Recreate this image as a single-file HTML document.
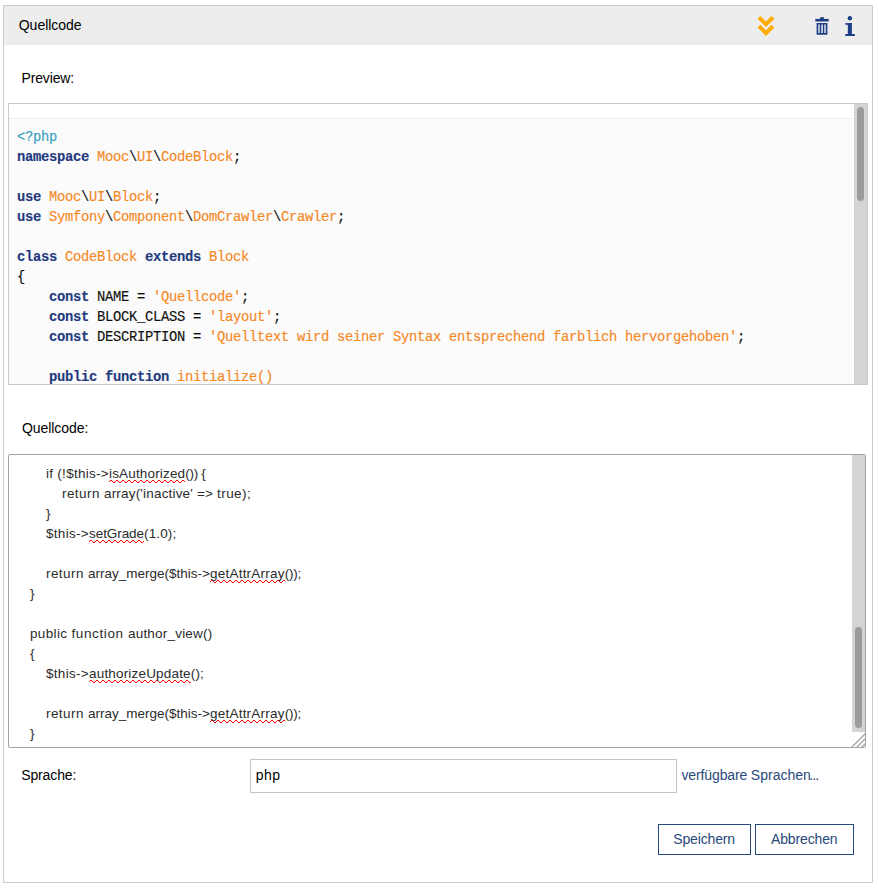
<!DOCTYPE html>
<html lang="de">
<head>
<meta charset="utf-8">
<title>Quellcode</title>
<style>
html,body{margin:0;padding:0;background:#fff;}
body{width:879px;height:888px;position:relative;overflow:hidden;font-family:"Liberation Sans",sans-serif;font-size:14px;color:#111;}
.abs{position:absolute;}
#block{left:3px;top:5px;width:868px;height:876px;border:1px solid #ccc;background:#fff;}
#head{left:4px;top:6px;width:868px;height:39px;background:#ededed;}
.lbl{white-space:pre;line-height:16px;height:16px;color:#000;font-size:14px;}
#preview{left:8px;top:103px;width:858px;height:280px;border:1px solid #cbcbcb;background:#fff;overflow:hidden;}
#pre{left:0;top:14px;width:845px;height:270px;border-top:1px solid #efefef;background:#fbfbfb;}
.track{background:#d4d4d4;}
.thumb{background:#9b9b9d;border-radius:4px;}
.code{font-family:"Liberation Mono",monospace;font-size:13.8px;letter-spacing:-0.28px;line-height:20px;height:20px;white-space:pre;color:#111;left:8px;margin-top:2px;-webkit-text-stroke:0.15px;}
.k{color:#1f3a80;font-weight:bold;}
.c{color:#f5871f;}
.t{color:#379fc6;}
#ta{left:8px;top:454px;width:856px;height:292px;border:1px solid #a3a5a3;border-radius:2px;background:#fff;overflow:hidden;}
.tl{white-space:pre;line-height:20px;height:20px;color:#2b2b2b;font-size:13.5px;}
#inp{left:250px;top:759px;width:425px;height:32px;border:1px solid #c5c5c5;background:#fff;}
.btn{top:824px;height:29px;border:1px solid #28497c;background:#fff;color:#28497c;line-height:29px;text-align:center;white-space:pre;}
</style>
</head>
<body>
<div id="block" class="abs"></div>
<div id="head" class="abs"></div>
<div class="abs lbl" id="title" style="left:18.78px;top:17px;letter-spacing:-0.033px;">Quellcode</div>

<!-- header icons -->
<svg class="abs" style="left:752px;top:10px;" width="112" height="32" viewBox="752 10 112 32">
  <g fill="#ffab00">
    <polygon points="760.4,15.9 757.6,18.7 766,27.1 774.4,18.7 771.6,15.9 766,21.4"/>
    <polygon points="760.4,24.7 757.6,27.5 766,35.9 774.4,27.5 771.6,24.7 766,30.2"/>
  </g>
  <g fill="#1e3f85">
    <rect x="820.1" y="17.2" width="3.8" height="2"/>
    <rect x="815.3" y="18.9" width="13.4" height="2.6"/>
    <path fill-rule="evenodd" d="M816.6 23h10.8v11.8h-10.8z M818.3 24.5v8.4h1.4v-8.4z M821.3 24.5v8.4h1.5v-8.4z M824.3 24.5v8.4h1.4v-8.4z"/>
    <circle cx="849.9" cy="18.2" r="2.2"/>
    <rect x="845.3" y="23.1" width="6.6" height="1.7"/>
    <rect x="847.8" y="23.1" width="4.1" height="12"/>
    <rect x="845.3" y="34" width="9.5" height="2"/>
  </g>
</svg>

<div class="abs lbl" id="l1" style="left:21.48px;top:70px;letter-spacing:-0.145px;">Preview:</div>

<div id="preview" class="abs">
  <div id="pre" class="abs"></div>
  <div class="abs track" style="left:845px;top:0;width:13px;height:280px;"></div>
  <div class="abs thumb" style="left:848px;top:3px;width:7px;height:94px;"></div>
  <div class="abs code" style="top:22px;"><span class="t">&lt;?php</span></div>
  <div class="abs code" style="top:42px;"><span class="k">namespace</span> <span class="c">Mooc</span>\<span class="c">UI</span>\<span class="c">CodeBlock</span>;</div>
  <div class="abs code" style="top:82px;"><span class="k">use</span> <span class="c">Mooc</span>\<span class="c">UI</span>\<span class="c">Block</span>;</div>
  <div class="abs code" style="top:102px;"><span class="k">use</span> <span class="c">Symfony</span>\<span class="c">Component</span>\<span class="c">DomCrawler</span>\<span class="c">Crawler</span>;</div>
  <div class="abs code" style="top:142px;"><span class="k">class</span> <span class="c">CodeBlock</span> <span class="k">extends</span> <span class="c">Block</span></div>
  <div class="abs code" style="top:162px;">{</div>
  <div class="abs code" style="top:182px;">    <span class="k">const</span> NAME = <span class="c">'Quellcode'</span>;</div>
  <div class="abs code" style="top:202px;">    <span class="k">const</span> BLOCK_CLASS = <span class="c">'layout'</span>;</div>
  <div class="abs code" style="top:222px;">    <span class="k">const</span> DESCRIPTION = <span class="c">'Quelltext wird seiner Syntax entsprechend farblich hervorgehoben'</span>;</div>
  <div class="abs code" style="top:262px;">    <span class="k">public</span> <span class="k">function</span> <span class="c">initialize()</span></div>
</div>

<div class="abs lbl" id="l2" style="left:21.91px;top:420px;letter-spacing:-0.049px;">Quellcode:</div>

<div id="ta" class="abs">
  <div class="abs track" style="left:843px;top:0;width:13px;height:277px;"></div>
  <div class="abs thumb" style="left:846px;top:172px;width:7px;height:101px;"></div>
  <svg class="abs" style="left:842px;top:277px;" width="15" height="15" viewBox="0 0 15 15">
    <path d="M0.7 15.3L15.3 0.7M5.7 15.3L15.3 5.7M10.7 15.3L15.3 10.7" stroke="#a6a8a6" stroke-width="1.4" fill="none"/>
  </svg>
<!--TA-->
  <div class="abs tl" style="left:37px;top:9px;letter-spacing:0.279px;">if (!$this-&gt;</div>
  <svg class="abs" style="left:100px;top:25px;" width="76" height="3" viewBox="0 0 76 3" shape-rendering="crispEdges"><path d="M0 1h1v1h-1zM1 0h2v1h-2zM3 1h1v1h-1zM4 2h2v1h-2zM6 1h1v1h-1zM7 0h2v1h-2zM9 1h1v1h-1zM10 2h2v1h-2zM12 1h1v1h-1zM13 0h2v1h-2zM15 1h1v1h-1zM16 2h2v1h-2zM18 1h1v1h-1zM19 0h2v1h-2zM21 1h1v1h-1zM22 2h2v1h-2zM24 1h1v1h-1zM25 0h2v1h-2zM27 1h1v1h-1zM28 2h2v1h-2zM30 1h1v1h-1zM31 0h2v1h-2zM33 1h1v1h-1zM34 2h2v1h-2zM36 1h1v1h-1zM37 0h2v1h-2zM39 1h1v1h-1zM40 2h2v1h-2zM42 1h1v1h-1zM43 0h2v1h-2zM45 1h1v1h-1zM46 2h2v1h-2zM48 1h1v1h-1zM49 0h2v1h-2zM51 1h1v1h-1zM52 2h2v1h-2zM54 1h1v1h-1zM55 0h2v1h-2zM57 1h1v1h-1zM58 2h2v1h-2zM60 1h1v1h-1zM61 0h2v1h-2zM63 1h1v1h-1zM64 2h2v1h-2zM66 1h1v1h-1zM67 0h2v1h-2zM69 1h1v1h-1zM70 2h2v1h-2zM72 1h1v1h-1zM73 0h2v1h-2zM75 1h1v1h-1z" fill="#f00"/></svg>
  <div class="abs tl" style="left:100px;top:9px;letter-spacing:0.167px;">isAuthorized</div>
  <div class="abs tl" style="left:176.3px;top:9px;letter-spacing:-0.310px;">()) {</div>
  <div class="abs tl" style="left:53px;top:29px;letter-spacing:0.424px;">return </div>
  <div class="abs tl" style="left:95px;top:29px;letter-spacing:0.180px;">array(&#x27;inactive&#x27; </div>
  <div class="abs tl" style="left:188px;top:29px;letter-spacing:0.156px;">=&gt; </div>
  <div class="abs tl" style="left:208px;top:29px;letter-spacing:0.447px;">true);</div>
  <div class="abs tl" style="left:37px;top:49px;letter-spacing:0.000px;">}</div>
  <div class="abs tl" style="left:37px;top:69px;letter-spacing:0.299px;">$this-&gt;</div>
  <svg class="abs" style="left:80px;top:85px;" width="55" height="3" viewBox="0 0 55 3" shape-rendering="crispEdges"><path d="M0 1h1v1h-1zM1 0h2v1h-2zM3 1h1v1h-1zM4 2h2v1h-2zM6 1h1v1h-1zM7 0h2v1h-2zM9 1h1v1h-1zM10 2h2v1h-2zM12 1h1v1h-1zM13 0h2v1h-2zM15 1h1v1h-1zM16 2h2v1h-2zM18 1h1v1h-1zM19 0h2v1h-2zM21 1h1v1h-1zM22 2h2v1h-2zM24 1h1v1h-1zM25 0h2v1h-2zM27 1h1v1h-1zM28 2h2v1h-2zM30 1h1v1h-1zM31 0h2v1h-2zM33 1h1v1h-1zM34 2h2v1h-2zM36 1h1v1h-1zM37 0h2v1h-2zM39 1h1v1h-1zM40 2h2v1h-2zM42 1h1v1h-1zM43 0h2v1h-2zM45 1h1v1h-1zM46 2h2v1h-2zM48 1h1v1h-1zM49 0h2v1h-2zM51 1h1v1h-1zM52 2h2v1h-2zM54 1h1v1h-1z" fill="#f00"/></svg>
  <div class="abs tl" style="left:80px;top:69px;letter-spacing:-0.066px;">setGrade</div>
  <div class="abs tl" style="left:135px;top:69px;letter-spacing:0.147px;">(1.0);</div>
  <div class="abs tl" style="left:37px;top:109px;letter-spacing:0.424px;">return </div>
  <div class="abs tl" style="left:79px;top:109px;letter-spacing:0.004px;">array_merge($this-&gt;</div>
  <svg class="abs" style="left:201px;top:125px;" width="75" height="3" viewBox="0 0 75 3" shape-rendering="crispEdges"><path d="M0 1h1v1h-1zM1 0h2v1h-2zM3 1h1v1h-1zM4 2h2v1h-2zM6 1h1v1h-1zM7 0h2v1h-2zM9 1h1v1h-1zM10 2h2v1h-2zM12 1h1v1h-1zM13 0h2v1h-2zM15 1h1v1h-1zM16 2h2v1h-2zM18 1h1v1h-1zM19 0h2v1h-2zM21 1h1v1h-1zM22 2h2v1h-2zM24 1h1v1h-1zM25 0h2v1h-2zM27 1h1v1h-1zM28 2h2v1h-2zM30 1h1v1h-1zM31 0h2v1h-2zM33 1h1v1h-1zM34 2h2v1h-2zM36 1h1v1h-1zM37 0h2v1h-2zM39 1h1v1h-1zM40 2h2v1h-2zM42 1h1v1h-1zM43 0h2v1h-2zM45 1h1v1h-1zM46 2h2v1h-2zM48 1h1v1h-1zM49 0h2v1h-2zM51 1h1v1h-1zM52 2h2v1h-2zM54 1h1v1h-1zM55 0h2v1h-2zM57 1h1v1h-1zM58 2h2v1h-2zM60 1h1v1h-1zM61 0h2v1h-2zM63 1h1v1h-1zM64 2h2v1h-2zM66 1h1v1h-1zM67 0h2v1h-2zM69 1h1v1h-1zM70 2h2v1h-2zM72 1h1v1h-1zM73 0h2v1h-2z" fill="#f00"/></svg>
  <div class="abs tl" style="left:201px;top:109px;letter-spacing:0.222px;">getAttrArray</div>
  <div class="abs tl" style="left:275.7px;top:109px;letter-spacing:-0.237px;">());</div>
  <div class="abs tl" style="left:21px;top:129px;letter-spacing:0.000px;">}</div>
  <div class="abs tl" style="left:21px;top:169px;letter-spacing:0.353px;">public </div>
  <div class="abs tl" style="left:62.5px;top:169px;letter-spacing:0.606px;">function </div>
  <div class="abs tl" style="left:119px;top:169px;letter-spacing:0.200px;">author_view()</div>
  <div class="abs tl" style="left:21px;top:189px;letter-spacing:0.000px;">{</div>
  <div class="abs tl" style="left:37px;top:209px;letter-spacing:0.299px;">$this-&gt;</div>
  <svg class="abs" style="left:80px;top:225px;" width="102" height="3" viewBox="0 0 102 3" shape-rendering="crispEdges"><path d="M0 1h1v1h-1zM1 0h2v1h-2zM3 1h1v1h-1zM4 2h2v1h-2zM6 1h1v1h-1zM7 0h2v1h-2zM9 1h1v1h-1zM10 2h2v1h-2zM12 1h1v1h-1zM13 0h2v1h-2zM15 1h1v1h-1zM16 2h2v1h-2zM18 1h1v1h-1zM19 0h2v1h-2zM21 1h1v1h-1zM22 2h2v1h-2zM24 1h1v1h-1zM25 0h2v1h-2zM27 1h1v1h-1zM28 2h2v1h-2zM30 1h1v1h-1zM31 0h2v1h-2zM33 1h1v1h-1zM34 2h2v1h-2zM36 1h1v1h-1zM37 0h2v1h-2zM39 1h1v1h-1zM40 2h2v1h-2zM42 1h1v1h-1zM43 0h2v1h-2zM45 1h1v1h-1zM46 2h2v1h-2zM48 1h1v1h-1zM49 0h2v1h-2zM51 1h1v1h-1zM52 2h2v1h-2zM54 1h1v1h-1zM55 0h2v1h-2zM57 1h1v1h-1zM58 2h2v1h-2zM60 1h1v1h-1zM61 0h2v1h-2zM63 1h1v1h-1zM64 2h2v1h-2zM66 1h1v1h-1zM67 0h2v1h-2zM69 1h1v1h-1zM70 2h2v1h-2zM72 1h1v1h-1zM73 0h2v1h-2zM75 1h1v1h-1zM76 2h2v1h-2zM78 1h1v1h-1zM79 0h2v1h-2zM81 1h1v1h-1zM82 2h2v1h-2zM84 1h1v1h-1zM85 0h2v1h-2zM87 1h1v1h-1zM88 2h2v1h-2zM90 1h1v1h-1zM91 0h2v1h-2zM93 1h1v1h-1zM94 2h2v1h-2zM96 1h1v1h-1zM97 0h2v1h-2zM99 1h1v1h-1zM100 2h2v1h-2z" fill="#f00"/></svg>
  <div class="abs tl" style="left:80px;top:209px;letter-spacing:0.181px;">authorizeUpdate</div>
  <div class="abs tl" style="left:181.8px;top:209px;letter-spacing:0.150px;">();</div>
  <div class="abs tl" style="left:37px;top:249px;letter-spacing:0.424px;">return </div>
  <div class="abs tl" style="left:79px;top:249px;letter-spacing:0.004px;">array_merge($this-&gt;</div>
  <svg class="abs" style="left:201px;top:265px;" width="75" height="3" viewBox="0 0 75 3" shape-rendering="crispEdges"><path d="M0 1h1v1h-1zM1 0h2v1h-2zM3 1h1v1h-1zM4 2h2v1h-2zM6 1h1v1h-1zM7 0h2v1h-2zM9 1h1v1h-1zM10 2h2v1h-2zM12 1h1v1h-1zM13 0h2v1h-2zM15 1h1v1h-1zM16 2h2v1h-2zM18 1h1v1h-1zM19 0h2v1h-2zM21 1h1v1h-1zM22 2h2v1h-2zM24 1h1v1h-1zM25 0h2v1h-2zM27 1h1v1h-1zM28 2h2v1h-2zM30 1h1v1h-1zM31 0h2v1h-2zM33 1h1v1h-1zM34 2h2v1h-2zM36 1h1v1h-1zM37 0h2v1h-2zM39 1h1v1h-1zM40 2h2v1h-2zM42 1h1v1h-1zM43 0h2v1h-2zM45 1h1v1h-1zM46 2h2v1h-2zM48 1h1v1h-1zM49 0h2v1h-2zM51 1h1v1h-1zM52 2h2v1h-2zM54 1h1v1h-1zM55 0h2v1h-2zM57 1h1v1h-1zM58 2h2v1h-2zM60 1h1v1h-1zM61 0h2v1h-2zM63 1h1v1h-1zM64 2h2v1h-2zM66 1h1v1h-1zM67 0h2v1h-2zM69 1h1v1h-1zM70 2h2v1h-2zM72 1h1v1h-1zM73 0h2v1h-2z" fill="#f00"/></svg>
  <div class="abs tl" style="left:201px;top:249px;letter-spacing:0.222px;">getAttrArray</div>
  <div class="abs tl" style="left:275.7px;top:249px;letter-spacing:-0.237px;">());</div>
  <div class="abs tl" style="left:21px;top:269px;letter-spacing:0.000px;">}</div>
<!--/TA-->
</div>

<div class="abs lbl" id="l3" style="left:21.20px;top:767px;letter-spacing:-0.120px;">Sprache:</div>
<div id="inp" class="abs"></div>
<div class="abs lbl" id="inptxt" style="left:255.66px;top:767px;letter-spacing:0.475px;">php</div>
<div class="abs lbl" id="lnk" style="left:681.46px;top:767px;color:#28497c;letter-spacing:-0.121px;">verfügbare</div>
<div class="abs lbl" id="lnk2" style="left:750.82px;top:767px;color:#28497c;letter-spacing:0.016px;">Sprachen</div>
<div class="abs lbl" id="lnk3" style="left:809.2px;top:767px;color:#28497c;letter-spacing:-0.8px;">...</div>

<div class="abs btn" style="left:658px;width:91px;"></div>
<div class="abs lbl" id="b1" style="left:673.32px;top:831px;color:#28497c;letter-spacing:-0.162px;">Speichern</div>
<div class="abs btn" style="left:755px;width:97px;"></div>
<div class="abs lbl" id="b2" style="left:771.04px;top:831px;color:#28497c;letter-spacing:-0.142px;">Abbrechen</div>
</body>
</html>
